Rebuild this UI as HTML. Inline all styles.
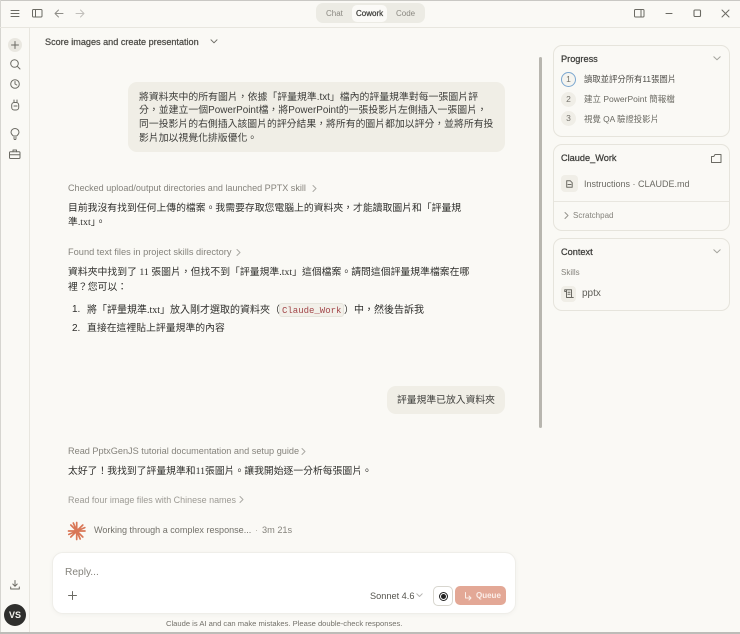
<!DOCTYPE html>
<html lang="zh-Hant"><head><meta charset="utf-8">
<style>
*{box-sizing:border-box}
html,body{margin:0;padding:0;width:740px;height:634px;overflow:hidden;background:#faf9f5}
body{font-family:"Liberation Sans","Noto Sans CJK TC",sans-serif;color:#3d3d3a;position:relative;filter:blur(.3px)}
.t{position:absolute;white-space:nowrap;line-height:14px}
.s{font-family:"Liberation Serif","Noto Sans CJK TC",serif}
.g{color:#85837c}
.h{-webkit-text-stroke:.25px currentColor}
.b{position:absolute}
svg{position:absolute;overflow:visible;fill:none;stroke:#6b6a63;stroke-width:1;stroke-linecap:round;stroke-linejoin:round}
.card{position:absolute;left:553px;width:177px;border:1px solid #e6e4dc;border-radius:9px;background:#faf9f5}
.num{position:absolute;left:561px;width:15px;height:15px;border-radius:50%;background:#f0eee7;font-size:8.5px;color:#73716a;text-align:center;line-height:15px}
</style></head><body>
<!-- window frame -->
<div class="b" style="left:0;top:0;width:740px;height:1px;background:#c9c8c4"></div>
<div class="b" style="left:0;top:0;width:1px;height:634px;background:#d6d5d0"></div>
<div class="b" style="left:0;top:632px;width:740px;height:2px;background:#bdbcb8"></div>
<div class="b" style="left:0;top:27px;width:740px;height:1px;background:#e8e6df"></div>
<div class="b" style="left:29px;top:28px;width:1px;height:604px;background:#e8e6df"></div>

<!-- title bar icons -->
<svg style="left:11px;top:9px" width="9" height="9"><path d="M0 1.5H8M0 4.5H8M0 7.5H8"/></svg>
<svg style="left:32px;top:9px" width="11" height="9"><rect x=".5" y=".5" width="9.5" height="7.5" rx="1"/><path d="M3.5 .5V8"/></svg>
<svg style="left:54px;top:9px" width="10" height="9" opacity=".75"><path d="M9 4.5H1M4.5 1L1 4.5L4.5 8"/></svg>
<svg style="left:75px;top:9px" width="10" height="9" opacity=".4"><path d="M1 4.5H9M5.5 1L9 4.5L5.5 8"/></svg>

<!-- tabs -->
<div class="b" style="left:316px;top:3px;width:109px;height:20px;background:#ecebe4;border-radius:7px"></div>
<div class="b" style="left:352px;top:5px;width:35px;height:17px;background:#fbfaf7;border-radius:5px"></div>
<div class="t" style="left:326px;top:6.5px;font-size:8px;color:#8a8881">Chat</div>
<div class="t h" style="left:356px;top:6.5px;font-size:8px;color:#3d3d3a">Cowork</div>
<div class="t" style="left:396px;top:6.5px;font-size:8px;color:#8a8881">Code</div>

<!-- window controls -->
<svg style="left:634px;top:9px" width="11" height="9"><rect x=".5" y=".5" width="9.5" height="7.5" rx="1"/><path d="M7 .5V8"/></svg>
<svg style="left:665px;top:9px" width="9" height="9"><path d="M1 4.5H7" stroke-width="1.1"/></svg>
<svg style="left:693px;top:9px" width="9" height="9"><rect x="1" y="1" width="6.5" height="6.5" rx="1" stroke-width="1.1"/></svg>
<svg style="left:721px;top:9px" width="9" height="9"><path d="M1 1L8 8M8 1L1 8"/></svg>

<!-- left rail -->
<div class="b" style="left:8px;top:38px;width:14px;height:14px;border-radius:50%;background:#e9e7e0"></div>
<svg style="left:11px;top:41px" width="8" height="8"><path d="M4 .5V7.5M.5 4H7.5"/></svg>
<svg style="left:10px;top:59px" width="11" height="11"><circle cx="4.5" cy="4.5" r="3.8"/><path d="M7.3 7.3L10 10"/></svg>
<svg style="left:10px;top:79px" width="10" height="10"><circle cx="5" cy="5" r="4.3"/><path d="M5 2.5V5L6.8 6"/></svg>
<svg style="left:11px;top:99px" width="9" height="12"><rect x=".7" y="3.5" width="7" height="7.5" rx="2.5"/><path d="M3 3.5V1M6 3.5V1M3 7H6"/></svg>
<svg style="left:10px;top:128px" width="10" height="12"><path d="M3.3 8C2.5 7 1 6.2 1 4.3A4 3.8 0 0 1 9 4.3C9 6.2 7.5 7 6.7 8ZM3.5 10H6.5M4.2 11.5H5.8"/></svg>
<svg style="left:9px;top:149px" width="12" height="10"><rect x=".5" y="2.8" width="10.5" height="6.7" rx="1"/><path d="M4 2.8V1H7.5V2.8M.5 5.8H11"/></svg>
<svg style="left:10px;top:580px" width="10" height="10"><path d="M5 .5V6M2.8 4L5 6.3L7.2 4M.7 7V9H9.3V7" /></svg>
<div class="b" style="left:4px;top:604px;width:22px;height:22px;border-radius:50%;background:#2f2f2d;color:#f4f3ee;font-size:9px;font-weight:bold;text-align:center;line-height:22px">VS</div>

<!-- header -->
<div class="t h" style="left:45px;top:35px;font-size:9.1px;color:#4d4c47">Score images and create presentation</div>
<svg style="left:210px;top:39px" width="8" height="5"><path d="M1 .8L4 3.8L7 .8"/></svg>

<!-- user bubble -->
<div class="b" style="left:128px;top:82px;width:377px;height:70px;background:#f0eee6;border-radius:9px"></div>
<div class="t" style="left:139px;top:90.5px;font-size:9.9px;color:#3d3d3a">將資料夾中的所有圖片，依據「評量規準.txt」檔內的評量規準對每一張圖片評</div>
<div class="t" style="left:139px;top:104px;font-size:9.9px;color:#3d3d3a">分，並建立一個PowerPoint檔，將PowerPoint的一張投影片左側插入一張圖片，</div>
<div class="t" style="left:139px;top:118px;font-size:9.85px;color:#3d3d3a">同一投影片的右側插入該圖片的評分結果，將所有的圖片都加以評分，並將所有投</div>
<div class="t" style="left:139px;top:131.5px;font-size:9.85px;color:#3d3d3a">影片加以視覺化排版優化。</div>

<!-- conversation -->
<div class="t g" style="left:68px;top:181px;font-size:9.06px">Checked upload/output directories and launched PPTX skill</div>
<svg style="left:312px;top:185px" width="5" height="7" opacity=".55"><path d="M1 .5L4 3.5L1 6.5"/></svg>
<div class="t s" style="left:68px;top:202px;font-size:9.83px;color:#2f2f2c">目前我沒有找到任何上傳的檔案。我需要存取您電腦上的資料夾，才能讀取圖片和「評量規</div>
<div class="t s" style="left:68px;top:216px;font-size:9.85px;color:#2f2f2c">準.txt」。</div>

<div class="t g" style="left:68px;top:245px;font-size:9.25px">Found text files in project skills directory</div>
<svg style="left:236px;top:249px" width="5" height="7" opacity=".55"><path d="M1 .5L4 3.5L1 6.5"/></svg>
<div class="t s" style="left:68px;top:266px;font-size:9.85px;color:#2f2f2c">資料夾中找到了 11 張圖片，但找不到「評量規準.txt」這個檔案。請問這個評量規準檔案在哪</div>
<div class="t s" style="left:68px;top:280.5px;font-size:9.85px;color:#2f2f2c">裡？您可以：</div>
<div class="t" style="left:72px;top:303px;font-size:10px;color:#2f2f2c">1.</div>
<div class="t s" style="left:87px;top:303.5px;font-size:10px;color:#2f2f2c">將「評量規準.txt」放入剛才選取的資料夾（</div>
<div class="b" style="left:279px;top:303px;width:65px;height:14px;background:#f2f0e9;border:1px solid #e6e4dc;border-radius:3px"></div>
<div class="t" style="left:282px;top:303.5px;font-family:'Liberation Mono',monospace;font-size:9px;color:#a3474a">Claude_Work</div>
<div class="t s" style="left:344px;top:303.5px;font-size:10px;color:#2f2f2c">）中，然後告訴我</div>
<div class="t" style="left:72px;top:322px;font-size:10px;color:#2f2f2c">2.</div>
<div class="t s" style="left:87px;top:322px;font-size:9.85px;color:#2f2f2c">直接在這裡貼上評量規準的內容</div>

<div class="b" style="left:387px;top:386px;width:118px;height:28px;background:#f0eee6;border-radius:9px"></div>
<div class="t" style="left:397px;top:394px;font-size:9.8px;color:#3d3d3a">評量規準已放入資料夾</div>

<div class="t g" style="left:68px;top:444px;font-size:9.16px">Read PptxGenJS tutorial documentation and setup guide</div>
<svg style="left:301px;top:448px" width="5" height="7" opacity=".55"><path d="M1 .5L4 3.5L1 6.5"/></svg>
<div class="t s" style="left:68px;top:465px;font-size:9.82px;color:#2f2f2c">太好了！我找到了評量規準和11張圖片。讓我開始逐一分析每張圖片。</div>
<div class="t g" style="left:68px;top:493px;font-size:8.97px;opacity:.8">Read four image files with Chinese names</div>
<svg style="left:239px;top:496px" width="5" height="7" opacity=".55"><path d="M1 .5L4 3.5L1 6.5"/></svg>

<!-- working -->
<svg style="left:67px;top:521px;stroke:#d97757;stroke-width:1.7" width="20" height="20"><path d="M9.7 1.5V18.5M1.5 10H18M3.8 4L15.8 16M15.8 4L3.8 16M6.3 2L13.2 18M17.8 6.6L1.8 13.4"/><circle cx="9.7" cy="10" r="2.6" fill="#d97757" stroke="none"/></svg>
<div class="t" style="left:94px;top:523px;font-size:9.05px;color:#73716a">Working through a complex response...</div>
<div class="t" style="left:255px;top:523px;font-size:9.05px;color:#b5b3ac">·</div>
<div class="t" style="left:262px;top:523px;font-size:9.2px;color:#85837c">3m 21s</div>

<!-- scrollbar -->
<div class="b" style="left:538.5px;top:57px;width:3.5px;height:371px;background:#b8b6af;border-radius:2px"></div>

<!-- input -->
<div class="b" style="left:52px;top:552px;width:464px;height:62px;background:#fff;border:1px solid #efeee9;border-radius:11px;box-shadow:0 1px 5px rgba(0,0,0,.04)"></div>
<div class="t" style="left:65px;top:565px;font-size:10.2px;color:#85837c;padding-top:1px">Reply...</div>
<svg style="left:68px;top:591px" width="9" height="9"><path d="M4.5 .5V8.5M.5 4.5H8.5"/></svg>
<div class="t" style="left:370px;top:589px;font-size:9.2px;color:#55544e">Sonnet 4.6</div>
<svg style="left:416px;top:593px" width="7" height="5" opacity=".5"><path d="M.8 .8L3.5 3.5L6.2 .8"/></svg>
<div class="b" style="left:433px;top:586px;width:20px;height:20px;border:1px solid #d8d6cf;border-radius:5px;background:#fff"></div>
<div class="b" style="left:438.5px;top:591.5px;width:9px;height:9px;border:1px solid #222;border-radius:50%"></div>
<div class="b" style="left:440.5px;top:593.5px;width:5px;height:5px;background:#222;border-radius:50%"></div>
<div class="b" style="left:455px;top:586px;width:51px;height:19px;background:#e3a896;border-radius:5px"></div>
<svg style="left:464px;top:592px;stroke:#fbeee9" width="9" height="9"><path d="M1.5 .5V6H7M5 4L7 6L5 8"/></svg>
<div class="t" style="left:476px;top:589px;font-size:8px;font-weight:bold;color:#fbeee9">Queue</div>
<div class="t" style="left:166px;top:617px;font-size:7.6px;color:#73716a">Claude is AI and can make mistakes. Please double-check responses.</div>

<!-- progress card -->
<div class="card" style="top:45px;height:92px"></div>
<div class="t h" style="left:561px;top:52px;font-size:9.2px;color:#3d3d3a">Progress</div>
<svg style="left:713px;top:56px" width="8" height="5" opacity=".6"><path d="M.8 .8L4 3.8L7.2 .8"/></svg>
<div class="num" style="top:72px;background:#f5f4ef;border:1px solid #7ba7d0;line-height:13px">1</div>
<div class="t" style="left:584px;top:72px;font-size:8.35px;color:#4d4c47">讀取並評分所有11張圖片</div>
<div class="num" style="top:92px">2</div>
<div class="t" style="left:584px;top:91.5px;font-size:8.5px;color:#6b6a63">建立 PowerPoint 簡報檔</div>
<div class="num" style="top:111px">3</div>
<div class="t" style="left:584px;top:111.5px;font-size:8.4px;color:#6b6a63">視覺 QA 驗證投影片</div>

<!-- Claude_Work card -->
<div class="card" style="top:144px;height:87px"></div>
<div class="t h" style="left:561px;top:151px;font-size:9.2px;color:#3d3d3a">Claude_Work</div>
<svg style="left:711px;top:154px" width="11" height="9"><path d="M.5 2.5V8.5H10V.5H4L2.8 2.5Z"/></svg>
<div class="b" style="left:561px;top:175px;width:17px;height:17px;border-radius:4px;background:#f0eee7"></div>
<svg style="left:566px;top:180px" width="7" height="8"><path d="M.7 .7H4.2L6.2 2.7V7.3H.7ZM2 4.5H5"/></svg>
<div class="t" style="left:584px;top:177px;font-size:9px;color:#6b6a63">Instructions · CLAUDE.md</div>
<div class="b" style="left:554px;top:201px;width:175px;height:1px;background:#e8e6df"></div>
<svg style="left:564px;top:212px" width="5" height="7" opacity=".7"><path d="M1 .5L4 3.5L1 6.5"/></svg>
<div class="t" style="left:573px;top:208.5px;font-size:8px;color:#85837c">Scratchpad</div>

<!-- Context card -->
<div class="card" style="top:238px;height:73px"></div>
<div class="t h" style="left:561px;top:245px;font-size:9.2px;color:#3d3d3a">Context</div>
<svg style="left:713px;top:249px" width="8" height="5" opacity=".6"><path d="M.8 .8L4 3.8L7.2 .8"/></svg>
<div class="t" style="left:561px;top:265.5px;font-size:8px;color:#85837c">Skills</div>
<div class="b" style="left:561px;top:286px;width:15px;height:16px;border-radius:4px;background:#f0eee7"></div>
<svg style="left:564px;top:289px" width="10" height="10"><path d="M.7 .7H7.5V8.5H9.3M2.5 .7V8.5H9.3M.7 .7V2.5H2.5M4 3.3H6M4 5.3H6"/></svg>
<div class="t" style="left:582px;top:287px;font-size:10px;color:#5f5e58">pptx</div>
</body></html>
